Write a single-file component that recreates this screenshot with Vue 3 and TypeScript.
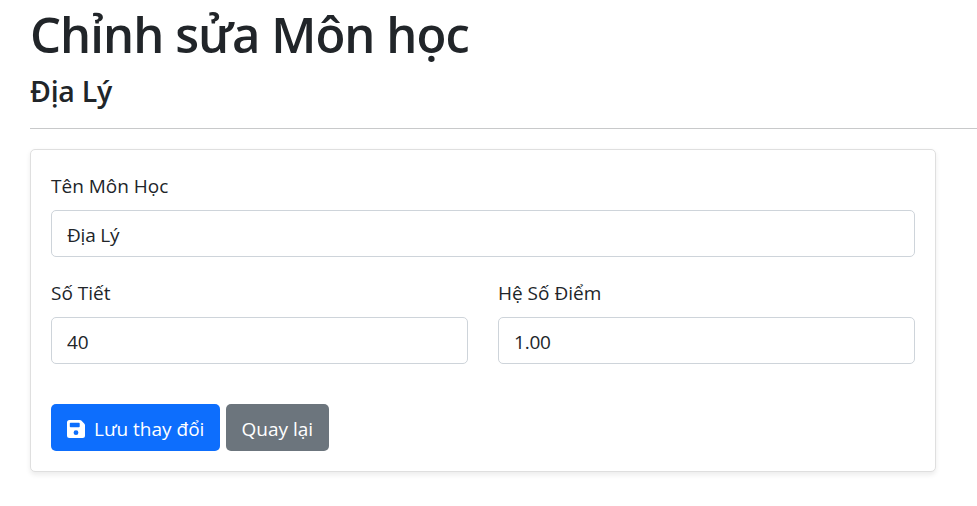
<script setup lang="ts">
import { reactive, ref } from 'vue'

interface Subject {
  name: string
  periods: string
  coefficient: string
}

const title = ref<string>('Địa Lý')
const subject = reactive<Subject>({ name: 'Địa Lý', periods: '40', coefficient: '1.00' })
</script>

<template>
  <main class="page">
    <h1 class="heading">Chỉnh sửa Môn học</h1>
    <h3 class="subheading">{{ title }}</h3>
    <hr class="divider" />
    <form class="card" @submit.prevent>
      <div class="field">
        <label for="name" class="label">Tên Môn Học</label>
        <input id="name" v-model="subject.name" class="control control-name" type="text" />
      </div>
      <div class="row">
        <div class="field">
          <label for="periods" class="label">Số Tiết</label>
          <input id="periods" v-model="subject.periods" class="control" type="text" />
        </div>
        <div class="field">
          <label for="coefficient" class="label">Hệ Số Điểm</label>
          <input id="coefficient" v-model="subject.coefficient" class="control control-coefficient" type="text" />
        </div>
      </div>
      <div class="actions">
        <button class="btn btn-primary" type="submit">
          <svg class="icon" viewBox="0 0 18 18" aria-hidden="true">
            <path
              fill="currentColor"
              fill-rule="evenodd"
              d="M2.500 0h10.400c.5 0 1 .2 1.400.6l3.100 3.100c.4.4.6.9.6 1.400v10.400a2.500 2.500 0 0 1-2.500 2.500h-13A2.500 2.500 0 0 1 0 15.500v-13A2.500 2.500 0 0 1 2.500 0zM3.600 2.700a.8.8 0 0 0-.8.8v3a.8.8 0 0 0 .8.8h8.300a.8.8 0 0 0 .8-.8v-3a.8.8 0 0 0-.8-.8zM9 10.300a2.400 2.400 0 1 0 0 4.800 2.400 2.400 0 0 0 0-4.800z"
            />
          </svg>
          <span>Lưu thay đổi</span>
        </button>
        <button class="btn btn-secondary" type="button">Quay lại</button>
      </div>
    </form>
  </main>
</template>

<style>
body {
  background: #fff;
  overflow: hidden;
}
</style>

<style scoped>
.page {
  box-sizing: border-box;
  height: 506px;
  padding: 4px 0 0 30px;
  color: #212529;
  font-family: 'Open Sans', 'Noto Sans', sans-serif;
  font-size: 19px;
}
.heading {
  margin: 0 0 9px;
  height: 60px;
  line-height: 60px;
  font-size: 49px;
  font-weight: 600;
  letter-spacing: -0.95px;
  white-space: nowrap;
}
.subheading {
  margin: 0;
  height: 36px;
  line-height: 36px;
  font-size: 28.5px;
  font-weight: 600;
  letter-spacing: -0.25px;
}
.divider {
  margin: 19px 0 20px;
  border: 0;
  border-top: 1px solid #c8c9ca;
}
.card {
  box-sizing: border-box;
  width: 906px;
  height: 323px;
  padding: 20px;
  border: 1px solid #dfdfdf;
  border-radius: 5px;
  background: #fff;
  box-shadow: 0 2.5px 5px rgba(0, 0, 0, 0.075);
}
.row {
  display: grid;
  grid-template-columns: 1fr 1fr;
  column-gap: 30px;
  margin-top: 20px;
}
.label {
  display: block;
  box-sizing: border-box;
  height: 30px;
  margin-bottom: 10px;
  padding-top: 1px;
  line-height: 30px;
  white-space: nowrap;
}
.control {
  display: block;
  box-sizing: border-box;
  width: 100%;
  height: 47px;
  padding: 2px 15px 0;
  border: 1px solid #ced4da;
  border-radius: 5px;
  outline: 0;
  background: #fff;
  color: inherit;
  font: inherit;
}
.control-name {
  letter-spacing: -0.2px;
}
.control-coefficient {
  letter-spacing: -0.2px;
}
.actions {
  display: flex;
  gap: 6px;
  margin-top: 40px;
}
.btn {
  display: flex;
  align-items: center;
  box-sizing: border-box;
  height: 47px;
  padding: 2px 15.5px 0;
  border: 0;
  border-radius: 5px;
  color: #fff;
  font: inherit;
  white-space: nowrap;
}
.btn-primary {
  width: 169px;
  background: #0d6efd;
}
.btn-secondary {
  width: 103px;
  background: #6c757d;
}
.icon {
  flex: none;
  width: 18px;
  height: 18px;
  margin-right: 9.5px;
}
</style>
